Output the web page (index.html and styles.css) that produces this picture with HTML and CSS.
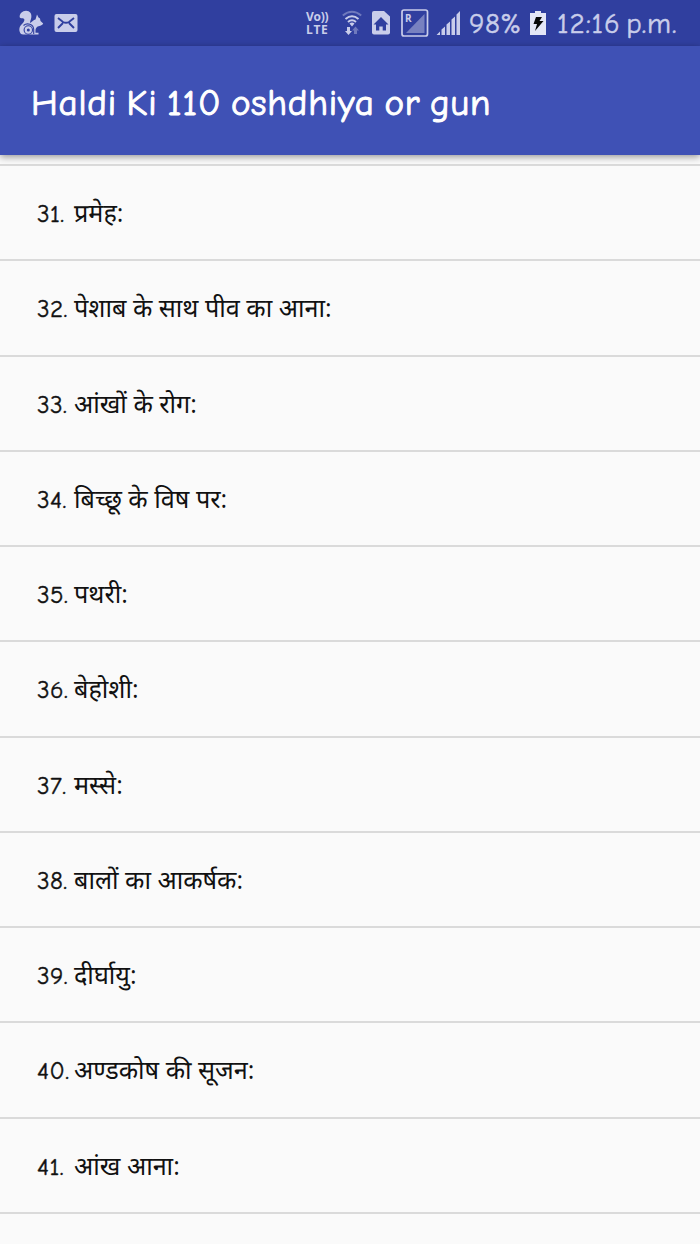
FILE: index.html
```
<!DOCTYPE html>
<html lang="hi">

<head>
  <meta charset="UTF-8" />
  <meta name="viewport" content="width=device-width, initial-scale=1.0" />
  <title>Haldi Ki 110 oshdhiya or gun</title>
  <link rel="stylesheet" href="styles.css">
</head>

<body>
  <div class="status-bar">
    <svg class="icon-squirrel" width="26" height="26" viewBox="0 0 26 26">
      <path fill="#c9cdea" d="M3 24C.5 21 1 17 3.500 14.500C6.500 11.500 7.500 9 5 8.200C3.500 8 2.500 8.500 1.800 7.500C1 4 4.500 .8 8 .8C12 .8 14 4 13.300 7.500C12.800 10.500 11.500 12 12.300 13C14 11.500 15.500 10 17.500 9.500L19 4.500L20.500 7.500L22 8.500L22.500 11L25.200 13.500C24 16 21 15.700 19 17C17.200 18.500 17.500 20.500 17.500 22.800H20.500V24.500H5Z" />
      <circle cx="10.300" cy="20" r="4.200" fill="none" stroke="#303f9f" stroke-width="1.100" />
      <circle cx="10.300" cy="20" r="1.500" fill="#303f9f" />
      <path fill="none" stroke="#303f9f" stroke-width="1.100" d="M5.500 15.500C9 12.500 15.500 14 15.700 19.500V24" />
    </svg>
    <svg class="icon-mail" width="24" height="20" viewBox="0 0 24 20">
      <rect x=".5" y="1" width="23" height="18" rx="2" fill="#c9cdea" />
      <path fill="none" stroke="#303f9f" stroke-width="1.900" d="M4 5L9 9Q12 10.500 15 9L20 5M4 15L9 10M20 15L15 10" />
    </svg>
    <div class="volte"><span>Vo))</span><span>LTE</span></div>
    <svg class="icon-wifi" width="20" height="26" viewBox="0 0 20 26">
      <g fill="none" stroke-width="2">
        <path stroke="#6f79bd" d="M.8 5.500Q10-2 19.200 5.500" />
        <path stroke="#c9cdea" d="M3.500 9Q10 3.500 16.500 9" />
        <path stroke="#c9cdea" d="M6 12Q10 8.500 14 12" />
      </g>
      <path fill="#c9cdea" d="M7.500 13.500Q10 11.500 12.500 13.500L10 16.500ZM5 17H8V21H10L6.500 25L3 21H5Z" />
      <path fill="#6f79bd" d="M12 24H15V20.500H17L13.500 16.500L10 20.500H12Z" />
    </svg>
    <svg class="icon-home" width="20" height="26" viewBox="0 0 20 26">
      <path fill="#c9cdea" d="M3 1H13L19 6.500V22.500Q19 24.500 17 24.500H3Q1 24.500 1 22.500V3Q1 1 3 1Z" />
      <path fill="#303f9f" d="M10 7L2.500 14.500H5V20.500H8.300V16.500H11.700V20.500H15V14.500H17.500Z" />
    </svg>
    <svg class="icon-roaming" width="28" height="28" viewBox="0 0 28 28">
      <rect x="1" y="1" width="25.500" height="26" rx="2" fill="none" stroke="#c9cdea" stroke-width="1.700" />
      <path fill="#7881c0" d="M23.500 5V24H5Z" />
      <text class="roaming-letter" x="4" y="13">R</text>
    </svg>
    <svg class="icon-signal" width="25" height="26" viewBox="0 0 25 26">
      <path fill="#c9cdea" d="M.5 25L4 21.500V25ZM5.500 25V19.500L9 16.500V25ZM10.500 25V14.500L14 11.500V25ZM15.500 25V9.500L19 6.500V25ZM20.500 25V4.500L24 1V25Z" />
    </svg>
    <span class="battery-text">98%</span>
    <svg class="icon-battery" width="16" height="25" viewBox="0 0 16 25">
      <path fill="#e4e6f6" d="M5 0H11V2H16V24H0V2H5Z" />
      <path fill="#080808" d="M6 6H12L9.500 10H13.500L5 20L7 13H3.500Z" />
    </svg>
    <span class="clock">12:16 p.m.</span>
  </div>

  <div class="app-bar">
    <h1>Haldi Ki 110 oshdhiya or gun</h1>
  </div>

  <ul class="list">
    <li><span class="num">31.</span><span class="name">प्रमेह:</span></li>
    <li><span class="num">32.</span><span class="name">पेशाब के साथ पीव का आना:</span></li>
    <li><span class="num">33.</span><span class="name">आंखों के रोग:</span></li>
    <li><span class="num">34.</span><span class="name">बिच्छू के विष पर:</span></li>
    <li><span class="num">35.</span><span class="name">पथरी:</span></li>
    <li><span class="num">36.</span><span class="name">बेहोशी:</span></li>
    <li><span class="num">37.</span><span class="name">मस्से:</span></li>
    <li><span class="num">38.</span><span class="name">बालों का आकर्षक:</span></li>
    <li><span class="num">39.</span><span class="name">दीर्घायु:</span></li>
    <li><span class="num">40.</span><span class="name">अण्डकोष की सूजन:</span></li>
    <li><span class="num">41.</span><span class="name">आंख आना:</span></li>
  </ul>
</body>

</html>
```

FILE: styles.css
```
* {
  box-sizing: border-box;
}

body {
  margin: 0;
  height: 1244px;
  overflow: hidden;
  background: #fafafa;
  font-family: "Comic Neue", "Open Sans", "Noto Sans Devanagari", "Noto Sans", sans-serif;
}

.status-bar {
  display: flex;
  align-items: center;
  height: 46px;
  padding-left: 18px;
  background: #303f9f;
  color: #c9cdea;
  white-space: nowrap;
}

.status-bar svg {
  flex: none;
  display: block;
}

.icon-mail {
  margin-left: 10px;
}

.volte {
  display: flex;
  flex-direction: column;
  width: 24px;
  margin-left: 228px;
  font-family: "Open Sans", sans-serif;
  font-size: 12px;
  font-weight: 700;
  line-height: 13px;
  letter-spacing: -0.3px;
}

.volte span + span {
  letter-spacing: 0.6px;
}

.icon-wifi {
  margin-left: 12px;
}

.icon-home {
  margin-left: 9px;
}

.icon-roaming {
  margin-left: 10px;
}

.roaming-letter {
  font-family: "Open Sans", sans-serif;
  font-size: 10px;
  font-weight: 700;
  fill: #c9cdea;
}

.icon-signal {
  margin-left: 7px;
}

.battery-text {
  width: 53px;
  margin-left: 8px;
  font-size: 29px;
  letter-spacing: 0.5px;
  -webkit-text-stroke: 0.5px #c9cdea;
}

.icon-battery {
  margin-left: 8px;
}

.clock {
  margin-left: 11px;
  font-size: 29px;
  letter-spacing: 0.9px;
  word-spacing: -5px;
  -webkit-text-stroke: 0.5px #c9cdea;
}

.app-bar {
  position: relative;
  display: flex;
  align-items: center;
  height: 109px;
  padding: 4px 32px 0 31px;
  background: #3f51b5;
  box-shadow: 0 2px 7px rgba(0, 0, 0, 0.4);
}

.app-bar h1 {
  margin: 0;
  color: #fff;
  font-size: 37px;
  font-weight: 500;
  letter-spacing: 0.8px;
  word-spacing: -3.500px;
  white-space: nowrap;
  -webkit-text-stroke: 1px #fff;
}

.list {
  margin: 9px 0 0;
  padding: 0;
  list-style: none;
  border-top: 2px solid #dadada;
}

.list li {
  display: flex;
  align-items: baseline;
  height: 95.250px;
  padding: 0 37px;
  border-bottom: 2px solid #dadada;
  color: #111;
  font-size: 25px;
  line-height: 92px;
}

.num {
  width: 37px;
  letter-spacing: 0.4px;
  -webkit-text-stroke: 0.4px #111;
}

.name {
  font-family: "Open Sans", "Noto Sans Devanagari", sans-serif;
  font-size: 25.200px;
}
```
